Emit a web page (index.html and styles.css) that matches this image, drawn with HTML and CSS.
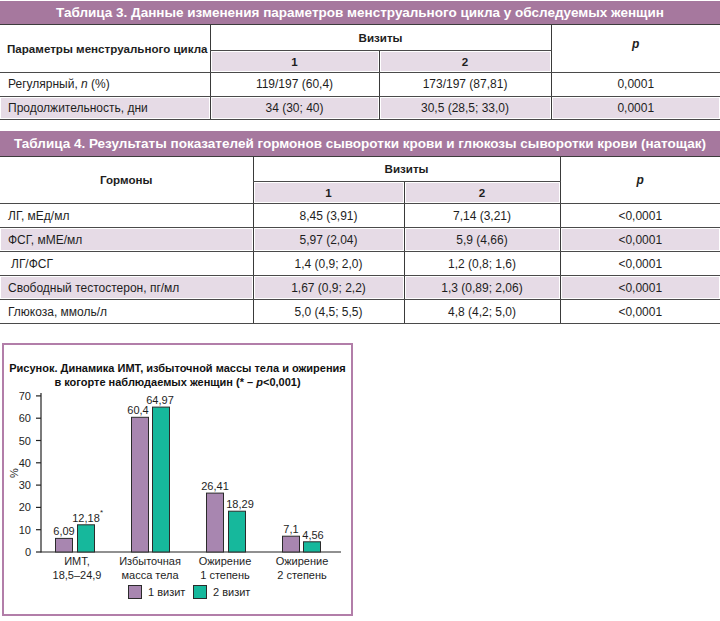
FILE: index.html
```html
<!DOCTYPE html>
<html lang="ru">
<head>
<meta charset="utf-8">
<link rel="stylesheet" href="styles.css">
</head>
<body>
<section class="block">
  <div class="cap cap3">Таблица 3. Данные изменения параметров менструального цикла у обследуемых женщин</div>
  <table class="tbl t3">
    <colgroup><col class="a"><col class="b"><col class="c"><col class="d"></colgroup>
    <thead>
      <tr class="hr1">
        <th rowspan="2" class="name">Параметры менструального цикла</th>
        <th colspan="2" class="vl">Визиты</th>
        <th rowspan="2" class="vl pcol praise"><i>p</i></th>
      </tr>
      <tr class="hr2">
        <th class="vl lav">1</th>
        <th class="vl lav">2</th>
      </tr>
    </thead>
    <tbody>
      <tr><td class="name">Регулярный, <i>n</i> (%)</td><td class="vl">119/197 (60,4)</td><td class="vl">173/197 (87,81)</td><td class="vl">0,0001</td></tr>
      <tr class="lavrow"><td class="name">Продолжительность, дни</td><td class="vl">34 (30; 40)</td><td class="vl">30,5 (28,5; 33,0)</td><td class="vl">0,0001</td></tr>
    </tbody>
  </table>
</section>

<section class="block block4">
  <div class="cap cap4">Таблица 4. Результаты показателей гормонов сыворотки крови и глюкозы сыворотки крови (натощак)</div>
  <table class="tbl t4">
    <colgroup><col class="a"><col class="b"><col class="c"><col class="d"></colgroup>
    <thead>
      <tr class="hr1">
        <th rowspan="2" class="center">Гормоны</th>
        <th colspan="2" class="vl">Визиты</th>
        <th rowspan="2" class="vl pcol"><i>p</i></th>
      </tr>
      <tr class="hr2">
        <th class="vl lav">1</th>
        <th class="vl lav">2</th>
      </tr>
    </thead>
    <tbody>
      <tr><td class="name">ЛГ, мЕд/мл</td><td class="vl">8,45 (3,91)</td><td class="vl">7,14 (3,21)</td><td class="vl">&lt;0,0001</td></tr>
      <tr class="lavrow"><td class="name">ФСГ, мМЕ/мл</td><td class="vl">5,97 (2,04)</td><td class="vl">5,9 (4,66)</td><td class="vl">&lt;0,0001</td></tr>
      <tr><td class="name indent">ЛГ/ФСГ</td><td class="vl">1,4 (0,9; 2,0)</td><td class="vl">1,2 (0,8; 1,6)</td><td class="vl">&lt;0,0001</td></tr>
      <tr class="lavrow"><td class="name">Свободный тестостерон, пг/мл</td><td class="vl">1,67 (0,9; 2,2)</td><td class="vl">1,3 (0,89; 2,06)</td><td class="vl">&lt;0,0001</td></tr>
      <tr><td class="name">Глюкоза, ммоль/л</td><td class="vl">5,0 (4,5; 5,5)</td><td class="vl">4,8 (4,2; 5,0)</td><td class="vl">&lt;0,0001</td></tr>
    </tbody>
  </table>
</section>

<figure class="fig">
  <figcaption class="figcap">Рисунок. Динамика ИМТ, избыточной массы тела и ожирения<br>в когорте наблюдаемых женщин (* – <i>p</i>&lt;0,001)</figcaption>
  <svg class="chart" width="347" height="224" viewBox="4 391 347 224" xmlns="http://www.w3.org/2000/svg">
    <g class="ticks" stroke="#222" stroke-width="1.2">
      <line x1="41" y1="395" x2="41" y2="554.5"/>
      <line x1="41" y1="554" x2="341" y2="554"/>
      <line x1="36" y1="554" x2="41" y2="554"/>
      <line x1="36" y1="531.7" x2="41" y2="531.7"/>
      <line x1="36" y1="509.4" x2="41" y2="509.4"/>
      <line x1="36" y1="487.1" x2="41" y2="487.1"/>
      <line x1="36" y1="464.8" x2="41" y2="464.8"/>
      <line x1="36" y1="442.5" x2="41" y2="442.5"/>
      <line x1="36" y1="420.2" x2="41" y2="420.2"/>
      <line x1="36" y1="397.9" x2="41" y2="397.9"/>
    </g>
    <g class="axis-labels" text-anchor="end">
      <text x="31" y="558">0</text>
      <text x="31" y="535.7">10</text>
      <text x="31" y="513.4">20</text>
      <text x="31" y="491.1">30</text>
      <text x="31" y="468.8">40</text>
      <text x="31" y="446.5">50</text>
      <text x="31" y="424.2">60</text>
      <text x="31" y="401.9">70</text>
    </g>
    <text class="axis-labels" transform="translate(18 475) rotate(-90)" text-anchor="middle">%</text>

    <g stroke="#2b2b2b" stroke-width="1">
      <rect class="b1" x="55.5" y="540.4" width="17" height="13.6"/>
      <rect class="b2" x="77.5" y="526.8" width="17" height="27.2"/>
      <rect class="b1" x="131.5" y="419.3" width="17" height="134.7"/>
      <rect class="b2" x="152.5" y="409.1" width="17" height="144.9"/>
      <rect class="b1" x="206.5" y="495.1" width="17" height="58.9"/>
      <rect class="b2" x="228.5" y="513.2" width="17" height="40.8"/>
      <rect class="b1" x="282.5" y="538.2" width="17" height="15.8"/>
      <rect class="b2" x="303.5" y="543.8" width="17" height="10.2"/>
    </g>

    <g class="vals" text-anchor="middle">
      <text x="64" y="537">6,09</text>
      <text x="86" y="523.5">12,18</text>
      <text x="138" y="416">60,4</text>
      <text x="160" y="406">64,97</text>
      <text x="215" y="492">26,41</text>
      <text x="240" y="510">18,29</text>
      <text x="291" y="535">7,1</text>
      <text x="313" y="540.5">4,56</text>
    </g>
    <text class="star" x="100" y="517">*</text>

    <g class="cats" text-anchor="middle">
      <text x="77" y="567">ИМТ,</text>
      <text x="77" y="581">18,5–24,9</text>
      <text x="150" y="567">Избыточная</text>
      <text x="150" y="581">масса тела</text>
      <text x="225" y="567">Ожирение</text>
      <text x="225" y="581">1 степень</text>
      <text x="302" y="567">Ожирение</text>
      <text x="302" y="581">2 степень</text>
    </g>

    <rect class="b1" x="128.5" y="587.5" width="13" height="13" stroke="#2b2b2b" stroke-width="1"/>
    <text class="cats" x="148" y="598">1 визит</text>
    <rect class="b2" x="193.5" y="587.5" width="13" height="13" stroke="#2b2b2b" stroke-width="1"/>
    <text class="cats" x="213" y="598">2 визит</text>
  </svg>
</figure>
</body>
</html>
```

FILE: styles.css
```css
* { box-sizing: border-box; }

body {
  margin: 0;
  padding-top: 1px;
  width: 720px;
  background: #fff;
  color: #1e1e1e;
  font-family: "Liberation Sans", Arial, sans-serif;
}

.block4 { margin-top: 11px; }

.cap {
  background: #a6789e;
  color: #fff;
  font-weight: bold;
  text-align: center;
  border-bottom: 1px solid #3c3c3c;
  white-space: nowrap;
  font-size: 13.5px;
}
.cap3 { height: 24px; line-height: 23px; }
.cap4 { height: 26px; line-height: 25px; }

.tbl {
  width: 720px;
  border-collapse: collapse;
  table-layout: fixed;
  font-size: 12px;
}
.t3 col.a { width: 210px; }
.t3 col.b { width: 169px; }
.t3 col.c { width: 172px; }
.t3 col.d { width: 169px; }
.t4 col.a { width: 253px; }
.t4 col.b { width: 151px; }
.t4 col.c { width: 156px; }
.t4 col.d { width: 160px; }

.tbl th, .tbl td {
  padding: 0;
  text-align: center;
  vertical-align: middle;
  border-bottom: 1px solid #4a4a4a;
}
.tbl th { font-weight: bold; font-size: 11.6px; }
.tbl .vl { border-left: 1px solid #3a3a3a; }
.tbl .name { text-align: left; padding-left: 8px; }
.tbl th.name { padding-left: 7px; }
.tbl .indent { padding-left: 11px; }
.tbl .pcol i { font-size: 12px; }
.t3 .praise { padding-bottom: 8px; }

.hr1 { height: 25px; }
.hr2 { height: 22px; }
.tbl tbody tr { height: 24px; }
.t3 tbody tr:last-child { height: 23px; }

.lav, .lavrow td {
  background: #e6dbe6;
  box-shadow: inset 1px 1px 0 #fff, inset -1px -1px 0 #fff;
}

.fig {
  margin: 19px 0 0 2px;
  width: 351px;
  height: 273px;
  border: 2px solid #b27ea9;
  padding: 0;
}
.figcap {
  padding-top: 16px;
  height: 44px;
  font-size: 11px;
  line-height: 14px;
  font-weight: bold;
  text-align: center;
  color: #111;
}
.chart { display: block; }

.axis-labels, .vals, .cats {
  font-family: "Liberation Sans", Arial, sans-serif;
  font-size: 11px;
  fill: #1e1e1e;
}
.star { font-family: "Liberation Sans", Arial, sans-serif; font-size: 8px; fill: #1e1e1e; }
.b1 { fill: #a886b0; }
.b2 { fill: #16b89c; }
```
